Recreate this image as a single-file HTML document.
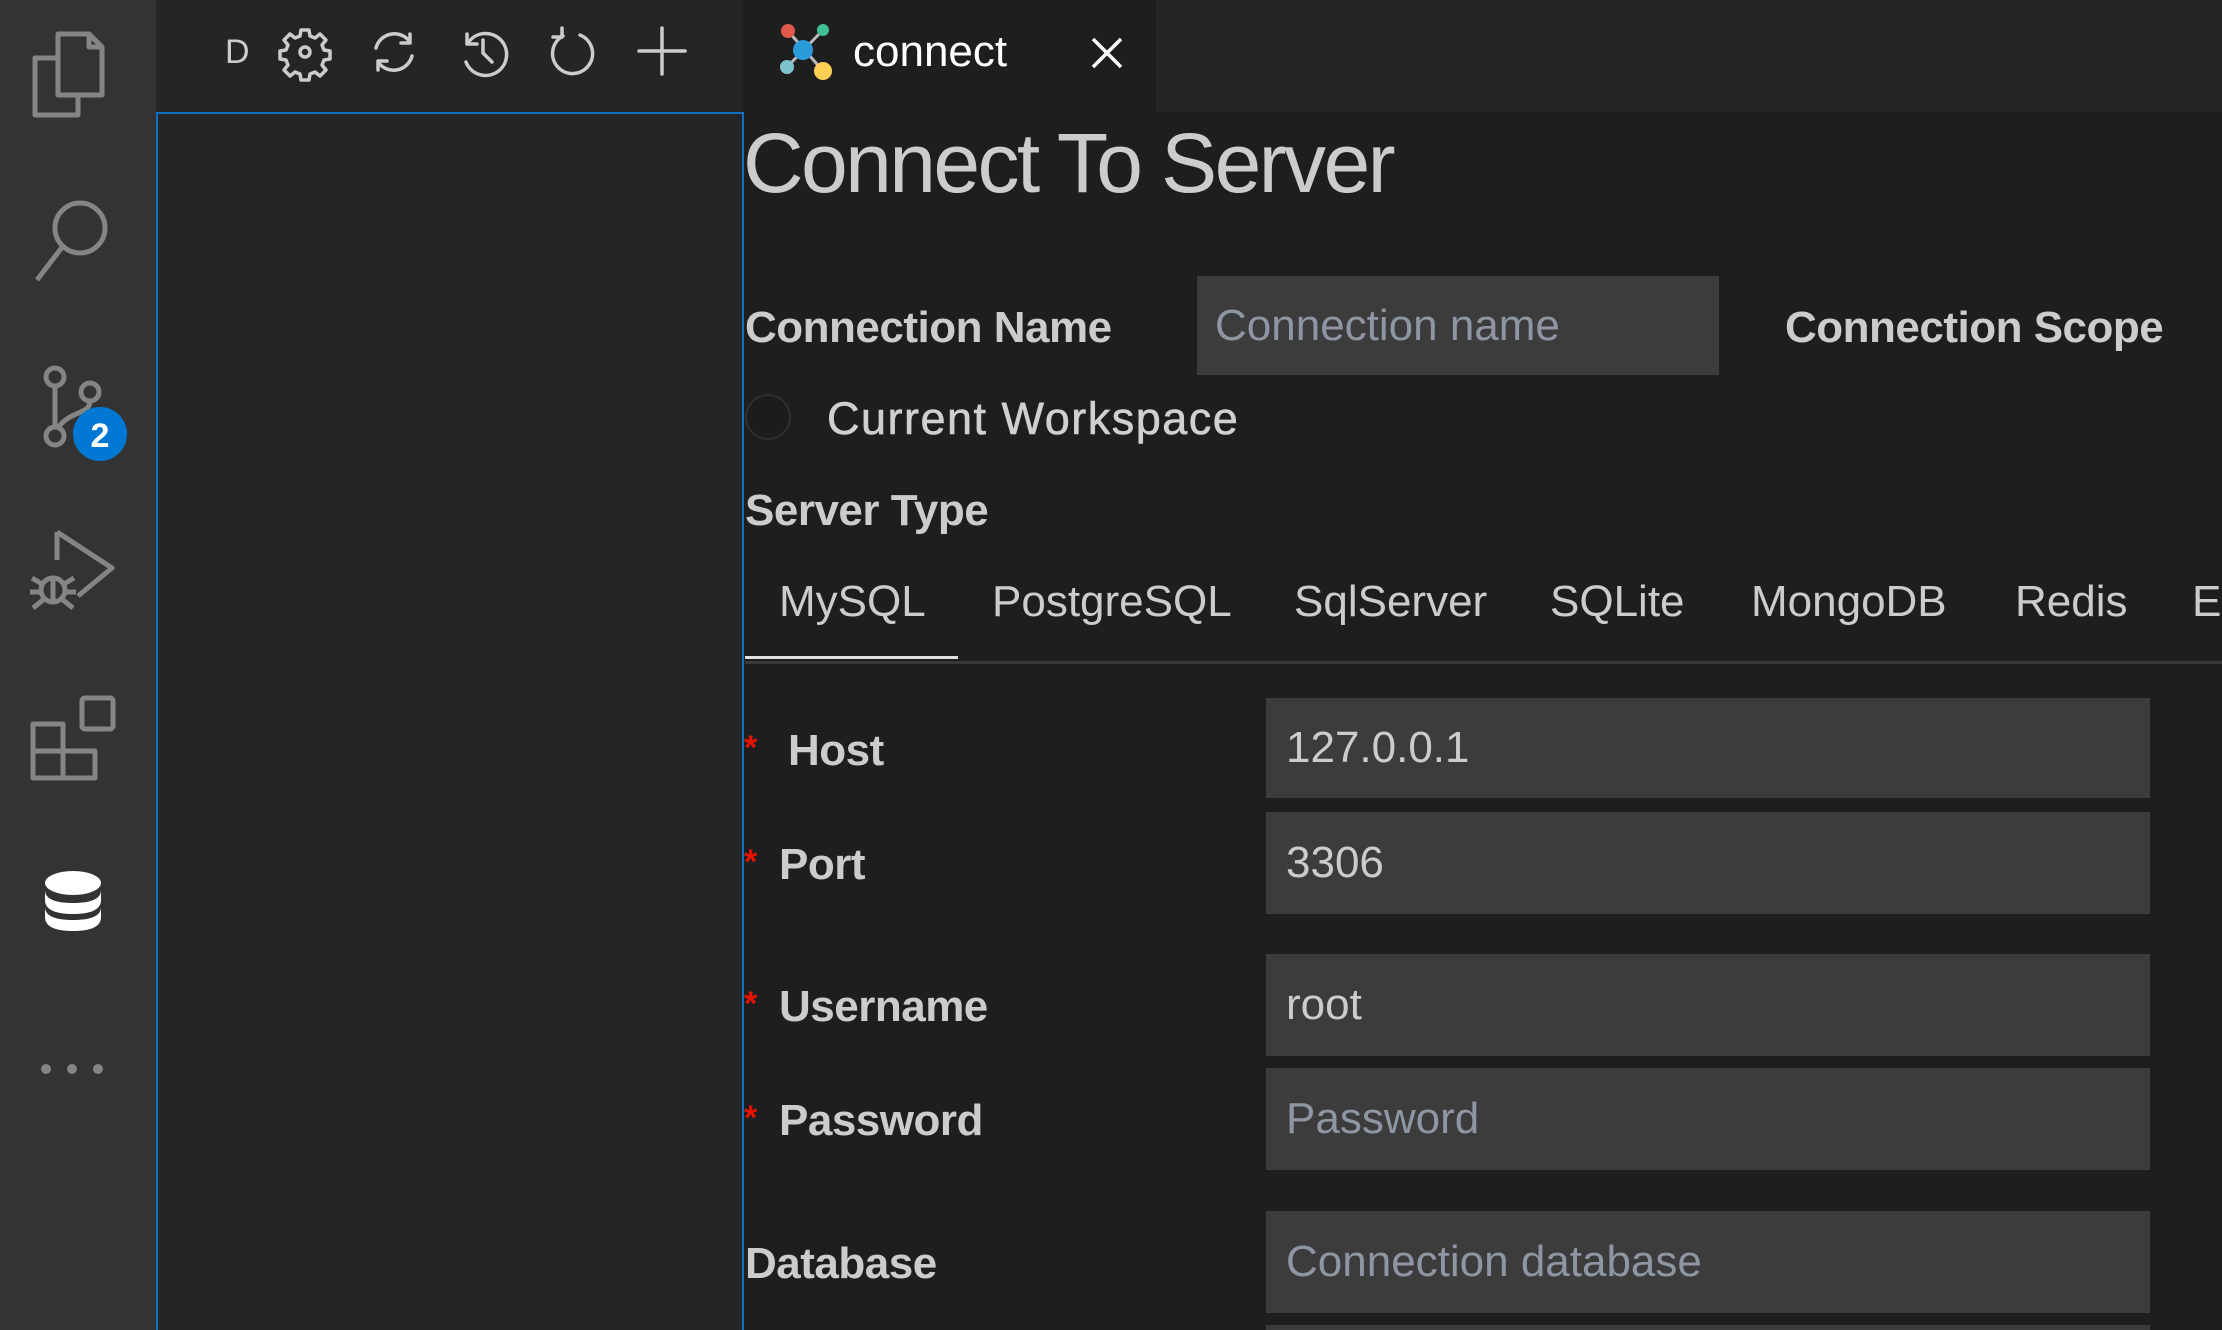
<!DOCTYPE html>
<html><head><meta charset="utf-8"><style>
*{margin:0;padding:0;box-sizing:border-box}
html,body{width:2222px;height:1330px;overflow:hidden}
body{background:#1e1e1e;position:relative;font-family:"Liberation Sans",sans-serif;color:#cccccc}
.abs{position:absolute}
#act{left:0;top:0;width:156px;height:1330px;background:#333333}
#side{left:156px;top:0;width:587px;height:1330px;background:#252526}
#sidebody{left:156px;top:112px;width:588px;height:1230px;border:2px solid #0e70c0;background:#252526}
#tabbar{left:743px;top:0;width:1479px;height:112px;background:#252526}
#tab{left:743px;top:0;width:413px;height:112px;background:#1e1e1e}
.t{position:absolute;white-space:nowrap;line-height:1}
.lbl{font-weight:bold;font-size:44px;color:#cccccc;letter-spacing:-0.5px}
.inp{position:absolute;background:#3c3c3c}
.val{position:absolute;left:20px;top:50%;transform:translateY(-50%);font-size:44px;line-height:1;white-space:nowrap;color:#cccccc}
.ph{color:#8e95a3}
.star{color:#e51400;font-size:34px;font-weight:bold}
.stab{font-size:44px;color:#cccccc;top:580px}
</style></head><body>
<div id="act" class="abs"></div>
<div id="side" class="abs"></div>
<div id="sidebody" class="abs"></div>
<div id="tabbar" class="abs"></div>
<div id="tab" class="abs"></div>

<svg class="abs" style="left:0;top:0" width="156" height="1330" fill="none" stroke="#858585" stroke-width="5" stroke-linejoin="round">
  <path d="M58 34 H89 L102 47 V95 H58 Z"/>
  <path d="M89 34 V47 H102"/>
  <path d="M58 58 H35 V115 H78 V95"/>
  <circle cx="80" cy="228" r="25"/>
  <path d="M63 246 L37 280"/>
  <circle cx="55" cy="377" r="9"/>
  <circle cx="90" cy="392" r="9"/>
  <circle cx="55" cy="436" r="9"/>
  <path d="M55 386 V427"/>
  <path d="M90 401 C90 415 70 410 58 428"/>
  <path d="M57 532 V560 M57 532 L112 568 L78 596"/>
  <circle cx="53" cy="590" r="12"/>
  <path d="M32 578 L42 584 M74 578 L64 584 M30 592 H41 M65 592 H76 M33 608 L43 600 M73 608 L63 600 M53 578 V602"/>
  <rect x="82" y="698" width="31" height="31" rx="3"/>
  <path d="M33 724 H63 V778 H33 Z M33 751 H95 V778 H63"/>
  <path d="M63 751 V724"/>
</svg>
<svg class="abs" style="left:0;top:0" width="156" height="1330">
  <circle cx="100" cy="434" r="27" fill="#0078d4"/>
  <text x="100" y="447" text-anchor="middle" font-family="Liberation Sans" font-weight="bold" font-size="34" fill="#fff">2</text>
  <g fill="#ffffff">
    <ellipse cx="73" cy="883" rx="28" ry="12"/>
    <path d="M45 890 Q45 903 73 903 Q101 903 101 890 V900 Q101 914 73 914 Q45 914 45 900 Z"/>
    <path d="M45 907 Q45 920 73 920 Q101 920 101 907 V917 Q101 931 73 931 Q45 931 45 917 Z"/>
  </g>
  <g fill="#858585"><circle cx="46" cy="1069" r="5"/><circle cx="72" cy="1069" r="5"/><circle cx="98" cy="1069" r="5"/></g>
</svg>

<div class="t" style="left:225px;top:35px;font-size:34px;color:#cccccc">D</div>
<svg class="abs" style="left:270px;top:22px" width="420" height="60" fill="none" stroke="#cccccc" stroke-width="3.5" stroke-linecap="round" stroke-linejoin="round">
  <path d="M31 8 h8 l1 6 l5 2 l5-4 l6 6 l-4 5 l2 5 l6 1 v8 l-6 1 l-2 5 l4 5 l-6 6 l-5-4 l-5 2 l-1 6 h-8 l-1-6 l-5-2 l-5 4 l-6-6 l4-5 l-2-5 l-6-1 v-8 l6-1 l2-5 l-4-5 l6-6 l5 4 l5-2 z"/>
  <circle cx="35" cy="30" r="5"/>
  <path d="M106 26 A19 19 0 0 1 140 20 M140 12 V21 H131"/>
  <path d="M142 34 A19 19 0 0 1 108 40 M108 48 V39 H117"/>
  <path d="M197 12 V22 H207"/>
  <path d="M198 21 A21 21 0 1 1 196 40"/>
  <path d="M213 18 V31 L222 40"/>
  <path d="M293 14 A20 20 0 1 0 310 13"/>
  <path d="M292 6 V15 H283"/>
  <path d="M392 6 V52 M369 29 H415"/>
</svg>

<svg class="abs" style="left:770px;top:15px" width="70" height="75">
  <g stroke="#bbbbbb" stroke-width="3"><path d="M18 16 L53 56 M53 15 L17 52"/></g>
  <circle cx="18" cy="16" r="7" fill="#e05a4c"/>
  <circle cx="53" cy="15" r="6" fill="#3fbf92"/>
  <circle cx="17" cy="52" r="7" fill="#7fc3cf"/>
  <circle cx="53" cy="56" r="9" fill="#fecf55"/>
  <circle cx="33" cy="35" r="10" fill="#2b9bd9"/>
</svg>
<div class="t" style="left:853px;top:30px;font-size:44px;color:#ffffff">connect</div>
<svg class="abs" style="left:1090px;top:36px" width="34" height="34" stroke="#ffffff" stroke-width="3.5"><path d="M3 3 L31 31 M31 3 L3 31"/></svg>

<div class="t" style="left:743px;top:121px;font-size:84px;color:#cccccc;letter-spacing:-2.6px">Connect To Server</div>

<div class="t lbl" style="left:745px;top:306px">Connection Name</div>
<div class="inp" style="left:1197px;top:276px;width:522px;height:99px"><div class="val ph" style="left:18px">Connection name</div></div>
<div class="t lbl" style="left:1785px;top:306px">Connection Scope</div>

<div class="abs" style="left:745px;top:394px;width:46px;height:46px;border-radius:50%;border:2px solid #2e2e2e;background:#1c1c1c"></div>
<div class="t" style="left:827px;top:396px;font-size:45px;color:#d0d0d0;letter-spacing:1.5px;-webkit-text-stroke:0.6px #d0d0d0">Current Workspace</div>

<div class="t lbl" style="left:745px;top:489px">Server Type</div>

<div class="t stab" style="left:779px">MySQL</div>
<div class="t stab" style="left:992px">PostgreSQL</div>
<div class="t stab" style="left:1294px">SqlServer</div>
<div class="t stab" style="left:1550px">SQLite</div>
<div class="t stab" style="left:1751px">MongoDB</div>
<div class="t stab" style="left:2015px">Redis</div>
<div class="t stab" style="left:2192px">El</div>
<div class="abs" style="left:745px;top:661px;width:1477px;height:3px;background:#383838"></div>
<div class="abs" style="left:745px;top:656px;width:213px;height:3px;background:#e0e0e0"></div>

<div class="t star" style="left:744px;top:731px">*</div><div class="t lbl" style="left:788px;top:729px">Host</div>
<div class="t star" style="left:744px;top:845px">*</div><div class="t lbl" style="left:779px;top:843px">Port</div>
<div class="t star" style="left:744px;top:987px">*</div><div class="t lbl" style="left:779px;top:985px">Username</div>
<div class="t star" style="left:744px;top:1101px">*</div><div class="t lbl" style="left:779px;top:1099px">Password</div>
<div class="t lbl" style="left:745px;top:1242px">Database</div>

<div class="inp" style="left:1266px;top:698px;width:884px;height:100px"><div class="val">127.0.0.1</div></div>
<div class="inp" style="left:1266px;top:812px;width:884px;height:102px"><div class="val">3306</div></div>
<div class="inp" style="left:1266px;top:954px;width:884px;height:102px"><div class="val">root</div></div>
<div class="inp" style="left:1266px;top:1068px;width:884px;height:102px"><div class="val ph">Password</div></div>
<div class="inp" style="left:1266px;top:1211px;width:884px;height:102px"><div class="val ph">Connection database</div></div>
<div class="inp" style="left:1266px;top:1325px;width:884px;height:5px"></div>
</body></html>
